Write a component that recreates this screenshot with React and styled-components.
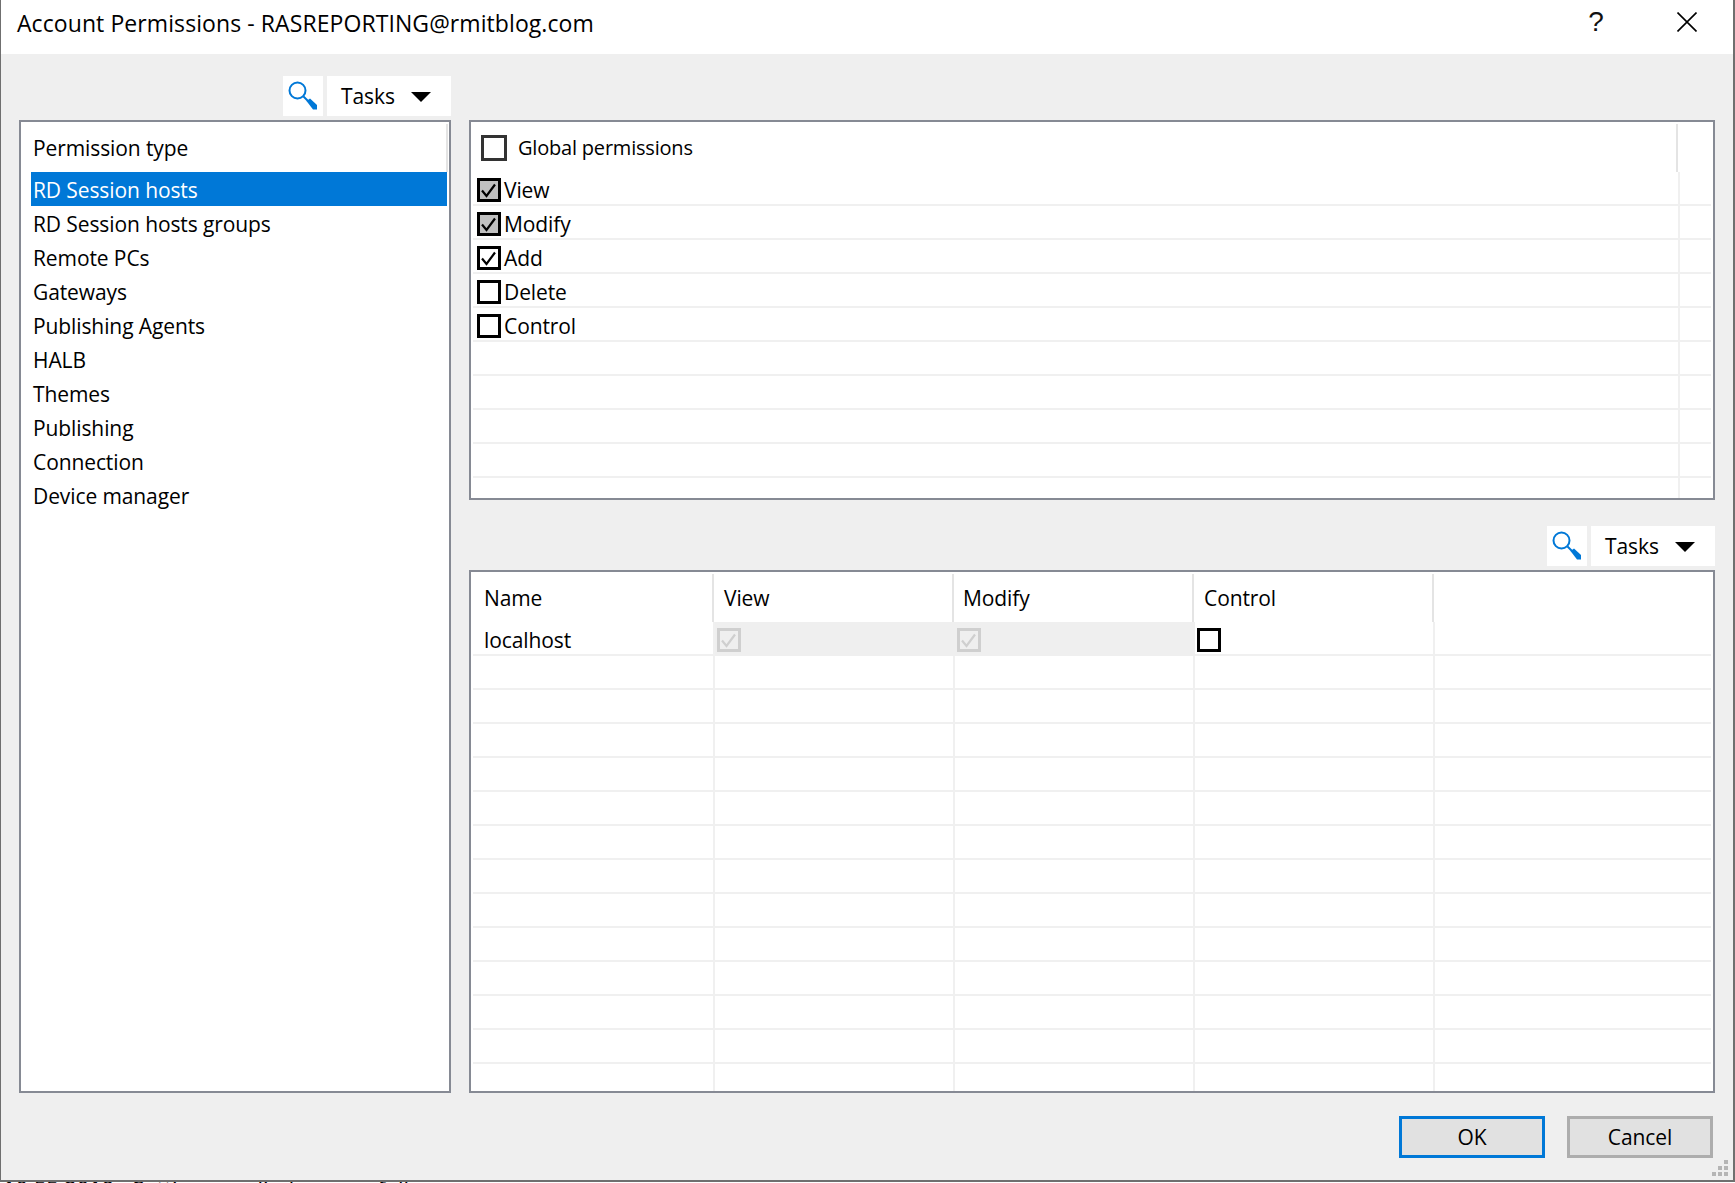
import { createGlobalStyle } from 'styled-components'
import styled from 'styled-components'

const GlobalStyle = createGlobalStyle`
  html, body {
    margin: 0;
    padding: 0;
    background: #fff;
  }
  body {
    font-family: "Open Sans", "Noto Sans", "Liberation Sans", sans-serif;
    font-size: 21px;
    letter-spacing: -0.1px;
    color: #000;
  }
`

const Screen = styled.div`
  width: 1735px;
  height: 1183px;
  overflow: hidden;
  display: flex;
  flex-direction: column;
`

const Dialog = styled.div`
  position: relative;
  box-sizing: border-box;
  flex: none;
  height: 1182px;
  display: flex;
  flex-direction: column;
  border-left: 1px solid #6f6f6f;
  border-right: 2px solid #6f6f6f;
  border-bottom: 2px solid #6f6f6f;
  background: #efefef;
`

const LogLine = styled.div`
  height: 1px;
  overflow: hidden;
  padding-left: 3px;
  font-size: 22px;
  line-height: 22px;
  white-space: nowrap;

  & span {
    display: block;
    margin-top: -5px;
  }
`

const TitleBar = styled.div`
  flex: none;
  height: 54px;
  background: #fff;
  display: flex;
  align-items: center;
  padding-left: 16px;
  font-size: 23px;
  letter-spacing: 0.08px;
`

const Title = styled.div`
  flex: 1;
  margin-top: -8px;
`

const HelpMark = styled.div`
  width: 20px;
  margin-right: 71px;
  margin-top: -10px;
  font-family: "Liberation Sans", sans-serif;
  font-size: 28px;
  color: #111;
  text-align: center;
`

const CloseMark = styled.svg`
  width: 20px;
  height: 20px;
  margin-right: 36px;
  margin-top: -10px;
  display: block;
`

const Body = styled.div`
  flex: 1;
  min-height: 0;
  padding: 22px 17px 0 18px;
  display: grid;
  grid-template-columns: 432px 1246px;
  column-gap: 18px;
  grid-template-rows: 1017px 42px;
  row-gap: 23px;
`

const Column = styled.div`
  display: flex;
  flex-direction: column;
  min-height: 0;
`

const Toolbar = styled.div`
  flex: none;
  height: 40px;
  margin-bottom: 4px;
  display: flex;
  justify-content: flex-end;
  gap: 4px;
`

const IconButton = styled.div`
  width: 40px;
  background: #fff;
  display: flex;
  align-items: center;
  justify-content: center;
`

const TasksButton = styled.div`
  width: 124px;
  background: #fff;
  display: flex;
  align-items: center;
  padding-left: 14px;
  box-sizing: border-box;
`

const Arrow = styled.span`
  margin-left: auto;
  margin-right: 20px;
  margin-top: 2px;
  width: 0;
  height: 0;
  border-left: 10px solid transparent;
  border-right: 10px solid transparent;
  border-top: 10px solid #000;
`

const Panel = styled.div`
  box-sizing: border-box;
  height: ${(p) => (p.$height ? `${p.$height}px` : 'auto')};
  flex: ${(p) => (p.$height ? 'none' : '1')};
  min-height: 0;
  overflow: hidden;
  border: 2px solid #868a94;
  background: #fff;
`

const PanelGap = styled.div`
  flex: none;
  height: 26px;
`

const HeadRow = styled.div`
  height: 50px;
  box-sizing: border-box;
  padding-top: 2px;
  display: flex;
`

const HeadCell = styled.div`
  box-sizing: border-box;
  width: ${(p) => p.$width}px;
  height: 48px;
  padding-left: ${(p) => p.$pad}px;
  display: flex;
  align-items: center;
  gap: 11px;
  border-right: 2px solid #e4e4e4;
  flex: none;
`

const HeadPlain = styled(HeadCell)`
  border-right: none;
`

const GlobalLabel = styled.span`
  font-size: 20px;
  letter-spacing: -0.2px;
  margin-top: -2px;
`

const ListBody = styled.div`
  padding: 0 2px 0 10px;
`

const ListRow = styled.div`
  height: 34px;
  box-sizing: border-box;
  padding: 2px 0 0 2px;
  display: flex;
  align-items: center;
  background: ${(p) => (p.$selected ? '#0078d7' : 'transparent')};
  color: ${(p) => (p.$selected ? '#fff' : '#000')};
`

const Rows = styled.div`
  margin-left: 2px;
  width: 1238px;
`

const Row = styled.div`
  display: flex;
  height: 34px;
`

const Cell = styled.div`
  box-sizing: border-box;
  width: ${(p) => p.$width}px;
  flex: none;
  height: 34px;
  padding: 4px 0 ${(p) => (p.$shaded ? 2 : 0)}px ${(p) => p.$pad || 0}px;
  display: flex;
  align-items: center;
  gap: 3px;
  border-bottom: ${(p) => (p.$shaded ? 'none' : '2px solid #f0f0f0')};
  border-right: ${(p) => (p.$last || p.$shaded ? 'none' : '2px solid #f0f0f0')};
  background: ${(p) => (p.$shaded ? '#efefef' : 'transparent')};
`

const Box = styled.span`
  box-sizing: border-box;
  flex: none;
  width: ${(p) => p.$size || 24}px;
  height: ${(p) => p.$size || 24}px;
  border: ${(p) => (p.$disabled ? '3px solid #cfcfcf' : p.$soft ? '3px solid #333' : '3px solid #000')};
  background: ${(p) => (p.$disabled ? '#efefef' : p.$grey ? '#c0c0c0' : '#fff')};
  display: block;

  & svg {
    display: block;
    width: 100%;
    height: 100%;
  }
`

const Footer = styled.div`
  grid-column: 1 / 3;
  display: flex;
  justify-content: flex-end;
  gap: 22px;
  padding-right: 2px;
`

const DialogButton = styled.div`
  box-sizing: border-box;
  width: 146px;
  height: 42px;
  background: #e1e1e1;
  border: 3px solid ${(p) => (p.$primary ? '#0078d7' : '#adadad')};
  display: flex;
  align-items: center;
  justify-content: center;
`

const Grip = styled.svg`
  position: absolute;
  right: 5px;
  bottom: 4px;
  width: 16px;
  height: 16px;
  display: block;
`

const permissionTypes = [
  'RD Session hosts',
  'RD Session hosts groups',
  'Remote PCs',
  'Gateways',
  'Publishing Agents',
  'HALB',
  'Themes',
  'Publishing',
  'Connection',
  'Device manager',
]

const permissions = [
  { label: 'View', checked: true, grey: true },
  { label: 'Modify', checked: true, grey: true },
  { label: 'Add', checked: true },
  { label: 'Delete' },
  { label: 'Control' },
  {},
  {},
  {},
  {},
  {},
]

const Check = ({ color = '#000' }) => (
  <svg viewBox="0 0 18 18">
    <polyline points="2,9.5 6.5,15 15,3.5" fill="none" stroke={color} strokeWidth="2.2" />
  </svg>
)

const Tools = () => (
  <Toolbar>
    <IconButton>
      <svg width="30" height="32" viewBox="0 0 30 32">
        <circle cx="9.5" cy="10.5" r="8" fill="none" stroke="#0078d7" strokeWidth="2" />
        <path d="M15.5 16.5 L20 21" stroke="#0078d7" strokeWidth="2" />
        <path d="M18.5 21 L22 18.5 L29 25 V29.5 H25 Z" fill="#0078d7" />
      </svg>
    </IconButton>
    <TasksButton>
      Tasks
      <Arrow />
    </TasksButton>
  </Toolbar>
)

const App = () => (
  <>
    <GlobalStyle />
    <Screen>
      <Dialog>
        <TitleBar>
          <Title>Account Permissions - RASREPORTING@rmitblog.com</Title>
          <HelpMark>?</HelpMark>
          <CloseMark viewBox="0 0 20 20">
            <path d="M0.5 0.5 L19.5 19.5 M19.5 0.5 L0.5 19.5" stroke="#000" strokeWidth="1.6" />
          </CloseMark>
        </TitleBar>
        <Body>
          <Column>
            <Tools />
            <Panel>
              <HeadRow>
                <HeadCell $width={427} $pad={12}>Permission type</HeadCell>
              </HeadRow>
              <ListBody>
                {permissionTypes.map((name, i) => (
                  <ListRow key={name} $selected={i === 0}>{name}</ListRow>
                ))}
              </ListBody>
            </Panel>
          </Column>
          <Column>
            <Toolbar />
            <Panel $height={380}>
              <HeadRow>
                <HeadCell $width={1207} $pad={10}>
                  <Box $size={26} $soft />
                  <GlobalLabel>Global permissions</GlobalLabel>
                </HeadCell>
              </HeadRow>
              <Rows>
                {permissions.map((perm, i) => (
                  <Row key={i}>
                    <Cell $width={1207} $pad={4}>
                      {perm.label && (
                        <>
                          <Box $grey={perm.grey}>{perm.checked && <Check />}</Box>
                          {perm.label}
                        </>
                      )}
                    </Cell>
                    <Cell $width={31} $last />
                  </Row>
                ))}
              </Rows>
            </Panel>
            <PanelGap />
            <Tools />
            <Panel>
              <HeadRow>
                <HeadCell $width={243} $pad={13}>Name</HeadCell>
                <HeadCell $width={240} $pad={10}>View</HeadCell>
                <HeadCell $width={240} $pad={9}>Modify</HeadCell>
                <HeadCell $width={240} $pad={10}>Control</HeadCell>
                <HeadPlain $width={200} />
              </HeadRow>
              <Rows>
                <Row>
                  <Cell $width={242} $pad={11}>localhost</Cell>
                  <Cell $width={240} $pad={2} $shaded>
                    <Box $disabled><Check color="#cfcfcf" /></Box>
                  </Cell>
                  <Cell $width={240} $pad={2} $shaded>
                    <Box $disabled><Check color="#cfcfcf" /></Box>
                  </Cell>
                  <Cell $width={240} $pad={2}><Box /></Cell>
                  <Cell $width={276} $last />
                </Row>
                {Array.from({ length: 13 }, (_, i) => (
                  <Row key={i}>
                    <Cell $width={242} />
                    <Cell $width={240} />
                    <Cell $width={240} />
                    <Cell $width={240} />
                    <Cell $width={276} $last />
                  </Row>
                ))}
              </Rows>
            </Panel>
          </Column>
          <Footer>
            <DialogButton $primary>OK</DialogButton>
            <DialogButton>Cancel</DialogButton>
          </Footer>
        </Body>
        <Grip viewBox="0 0 16 16">
          <path fill="#b5b5b5" d="M12 0h4v4h-4z M6 6h4v4H6z M12 6h4v4h-4z M0 12h4v4H0z M6 12h4v4H6z M12 12h4v4h-4z" />
        </Grip>
      </Dialog>
      <LogLine>
        <span>10:55 2019 - Settings applied successfully</span>
      </LogLine>
    </Screen>
  </>
)

export default App
